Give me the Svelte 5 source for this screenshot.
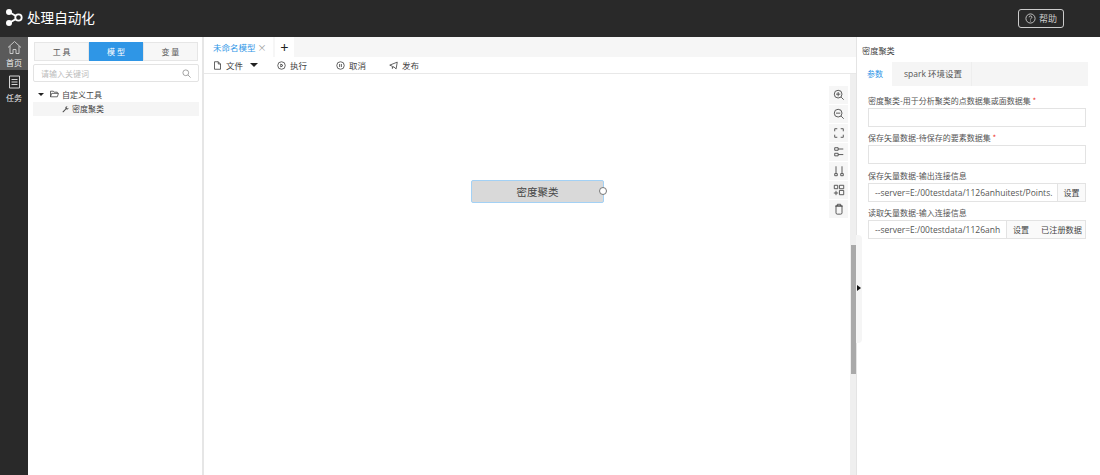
<script lang="ts">
  const toolbar = [
    { label: '文件', icon: 'file', caret: true },
    { label: '执行', icon: 'play' },
    { label: '取消', icon: 'pause' },
    { label: '发布', icon: 'send' }
  ];

  const canvasTools = [
    'M6 3.500v5M3.500 6h5M6 1.500a4.500 4.500 0 1 0 0 9a4.500 4.500 0 0 0 0-9zM9.500 9.500l3 3',
    'M3.500 6h5M6 1.500a4.500 4.500 0 1 0 0 9a4.500 4.500 0 0 0 0-9zM9.500 9.500l3 3',
    'M2 5V2h3M9 2h3v3M12 9v3H9M5 12H2V9',
    'M2 2h4v3H2zM2 8.500h4v3H2zM6 3.500h6M6 10h6',
    'M3.500 1.500v8M10.500 1.500v8M2 10h3v2.500H2zM9 10h3v2.500H9z',
    'M7.500 1.500h5v4h-5zM7.500 7.500h5v5h-5zM1.500 1.500h4v4h-4zM3.500 8v5M1 10.500h5',
    'M3.500 3.500h7v8a1.500 1.500 0 0 1-1.500 1.500H5a1.500 1.500 0 0 1-1.500-1.500zM2.500 3.500h9M5 3.500V1.500h4v2'
  ];
</script>

<div class="app">
  <header class="topbar">
    <div class="brand">
      <svg width="17" height="17" viewBox="0 0 17 17">
        <path d="M3 3L12.500 8.500L3 14" fill="none" stroke="#fff" stroke-width="2" />
        <circle cx="3" cy="3" r="3" fill="#fff" />
        <circle cx="12.500" cy="8.500" r="3.200" fill="#292929" stroke="#fff" stroke-width="1.800" />
        <circle cx="3" cy="14" r="3" fill="#fff" />
      </svg>
      <span>处理自动化</span>
    </div>
    <button class="help">
      <svg width="11" height="11" viewBox="0 0 12 12" fill="none" stroke="#ccc">
        <circle cx="6" cy="6" r="5" />
        <path d="M4.500 4.700a1.500 1.500 0 1 1 2.200 1.300c-.5.300-.7.500-.7 1M6 8.300v1" />
      </svg>
      帮助
    </button>
  </header>

  <div class="body">
    <nav class="rail">
      <div class="rail-item active">
        <svg width="15" height="15" viewBox="0 0 15 15" fill="none" stroke="#c9c9c9">
          <path d="M1 7.500L7.500 1.500L14 7.500M3 6v7.500h3V9.500h3v4h3V6" />
        </svg>
        <span>首页</span>
      </div>
      <div class="rail-item">
        <svg width="13" height="14" viewBox="0 0 13 14" fill="none" stroke="#d5d5d5">
          <path d="M1.500 1h10v12h-10zM3.500 4.500h6M3.500 7h6M3.500 9.500h6" />
        </svg>
        <span>任务</span>
      </div>
    </nav>

    <aside class="tools">
      <div class="seg">
        <div class="seg-btn">工 具</div>
        <div class="seg-btn on">模 型</div>
        <div class="seg-btn">变 量</div>
      </div>
      <div class="search">
        <span>请输入关键词</span>
        <svg width="9" height="9" viewBox="0 0 10 10" fill="none" stroke="#999">
          <circle cx="4.200" cy="4.200" r="3.200" />
          <path d="M6.700 6.700L9.500 9.500" />
        </svg>
      </div>
      <div class="tree-row root">
        <i class="caret"></i>
        <svg width="9" height="8" viewBox="0 0 11 10" fill="none" stroke="#444">
          <path d="M.5 8.500v-7h3.500l1 1.200h4v1.500M.5 8.500l1.500-4.300h8.500l-1.500 4.300z" />
        </svg>
        <span>自定义工具</span>
      </div>
      <div class="tree-row leaf">
        <svg width="7" height="7" viewBox="0 0 10 10" fill="#555">
          <path d="M9.500 2.500a2.500 2.500 0 0 1-3.400 2.300L2.200 9a1 1 0 0 1-1.300-1.300l4-3.900A2.500 2.500 0 0 1 8 .5L6.500 2l1.500 1.500z" />
        </svg>
        <span>密度聚类</span>
      </div>
    </aside>

    <main class="center">
      <div class="tabs">
        <div class="tab">未命名模型 <em>×</em></div>
        <div class="tab-add">+</div>
      </div>
      <div class="actions">
        {#each toolbar as item}
          <div class="action">
            <svg width="9" height="9" viewBox="0 0 12 12" fill="none" stroke="#333">
              {#if item.icon === 'file'}
                <path d="M2 1h5l3 3v7H2zM7 1v3h3" />
              {:else if item.icon === 'play'}
                <circle cx="6" cy="6" r="5" /><path d="M5 4l3 2l-3 2z" />
              {:else if item.icon === 'pause'}
                <circle cx="6" cy="6" r="5" /><path d="M4.800 4v4M7.200 4v4" />
              {:else}
                <path d="M1 5.500L11 1.500L9.500 10.500L6 7.500L4.500 10V7z" />
              {/if}
            </svg>
            <span>{item.label}</span>
            {#if item.caret}<i class="caret wide"></i>{/if}
          </div>
        {/each}
      </div>
      <div class="canvas">
        <div class="node">
          <span>密度聚类</span>
          <i class="port"></i>
        </div>
        <div class="canvas-tools">
          {#each canvasTools as d}
            <div class="canvas-tool">
              <svg width="12" height="12" viewBox="0 0 14 14" fill="none" stroke="#444">
                <path {d} />
              </svg>
            </div>
          {/each}
        </div>
        <div class="scrolltrack"><div class="scrollthumb"></div></div>
      </div>
    </main>

    <div class="collapse"><div class="handle"><i></i></div></div>

    <section class="props">
      <h3>密度聚类</h3>
      <div class="prop-tabs">
        <div class="prop-tab on">参数</div>
        <div class="prop-tab">spark 环境设置</div>
      </div>
      <div class="form">
        <label>密度聚类-用于分析聚类的点数据集或面数据集 <b>*</b></label>
        <div class="field"></div>
        <label>保存矢量数据-待保存的要素数据集 <b>*</b></label>
        <div class="field"></div>
        <label>保存矢量数据-输出连接信息</label>
        <div class="field">
          <span class="val">--server=E:/00testdata/1126anhuitest/Points.</span>
          <span class="addon">设置</span>
        </div>
        <label>读取矢量数据-输入连接信息</label>
        <div class="field">
          <span class="val">--server=E:/00testdata/1126anh</span>
          <span class="addon two"><span>设置</span><span class="reg">已注册数据</span></span>
        </div>
      </div>
    </section>
  </div>
</div>

<style>
  :global(body) {
    background: #fff;
  }

  .app {
    width: 1100px;
    height: 475px;
    display: flex;
    flex-direction: column;
    overflow: hidden;
    font-family: "Noto Sans CJK SC", "Open Sans", sans-serif;
    font-size: 8px;
    color: #444;
  }

  .topbar {
    height: 37px;
    flex: none;
    background: #292929;
    display: flex;
    align-items: center;
    justify-content: space-between;
    padding: 0 36px 0 6px;
    box-sizing: border-box;
  }

  .brand {
    display: flex;
    align-items: center;
    gap: 4px;
    color: #fff;
    font-size: 13.600px;
    line-height: 18px;
    margin-bottom: 3px;
  }

  .help {
    width: 46px;
    height: 19px;
    padding: 0;
    background: transparent;
    border: 1px solid #ccc;
    border-radius: 3px;
    color: #ccc;
    font: inherit;
    font-size: 9px;
    display: flex;
    align-items: center;
    justify-content: center;
    gap: 3px;
  }

  .body {
    flex: 1;
    display: flex;
    min-height: 0;
  }

  .rail {
    width: 28px;
    flex: none;
    background: #292929;
    color: #eee;
  }

  .rail-item {
    height: 33px;
    display: flex;
    flex-direction: column;
    align-items: center;
    justify-content: center;
    gap: 2px;
    line-height: 11px;
  }

  .rail-item + .rail-item {
    height: 37px;
    gap: 3px;
  }

  .rail-item.active {
    background: #5a5a5a;
  }

  .tools {
    width: 176px;
    flex: none;
    box-sizing: border-box;
    border-right: 2px solid #e6e6e6;
    padding: 5px 0 0 5px;
  }

  .seg {
    display: flex;
    height: 19px;
    margin-left: 1px;
    width: 164px;
    background: #e6e6e6;
    padding: 1px;
    box-sizing: border-box;
  }

  .seg-btn {
    flex: 1;
    background: #f7f7f7;
    display: flex;
    align-items: center;
    justify-content: center;
    color: #555;
  }

  .seg-btn.on {
    background: #2f96e6;
    color: #fff;
    margin: -1px 1px;
  }

  .search {
    margin-top: 3px;
    height: 18px;
    width: 166px;
    box-sizing: border-box;
    border: 1px solid #e3e3e3;
    border-radius: 2px;
    display: flex;
    align-items: center;
    justify-content: space-between;
    padding: 0 7px;
    color: #bbb;
  }

  .tree-row {
    height: 14px;
    display: flex;
    align-items: center;
    color: #444;
    width: 166px;
    box-sizing: border-box;
  }

  .root {
    margin-top: 5px;
    padding-left: 5px;
    gap: 3px;
  }

  .root .caret {
    margin-right: 3px;
  }

  .leaf {
    margin-top: 1px;
    padding-left: 29px;
    gap: 3px;
    background: #f5f5f5;
  }

  .leaf span {
    margin-bottom: 2px;
  }

  .caret {
    width: 0;
    height: 0;
    border-left: 3px solid transparent;
    border-right: 3px solid transparent;
    border-top: 3px solid #222;
  }

  .caret.wide {
    border-left-width: 4px;
    border-right-width: 4px;
    border-top-width: 4px;
    margin-left: 3px;
  }

  .center {
    flex: 1;
    min-width: 0;
    display: flex;
    flex-direction: column;
  }

  .tabs {
    height: 20px;
    flex: none;
    display: flex;
    background: #f6f6f6;
  }

  .tab {
    width: 69px;
    background: #fff;
    color: #2f96e6;
    font-size: 8.500px;
    line-height: 21px;
    padding-left: 9px;
    box-sizing: border-box;
    margin-right: 2px;
  }

  .tab em {
    font-style: normal;
    color: #999;
    font-size: 9px;
  }

  .tab-add {
    width: 19px;
    background: #fff;
    color: #222;
    font-size: 14px;
    line-height: 20px;
    text-align: center;
  }

  .actions {
    height: 17px;
    box-sizing: border-box;
    flex: none;
    display: flex;
    align-items: center;
    padding-left: 9px;
    border-bottom: 1px solid #e8e8e8;
    font-size: 8.500px;
  }

  .action {
    display: flex;
    align-items: center;
    gap: 4px;
    margin-right: 23px;
  }

  .action:first-child {
    margin-right: 19px;
  }

  .action:nth-child(2) {
    margin-right: 29px;
  }

  .canvas {
    flex: 1;
    position: relative;
    overflow: hidden;
  }

  .node {
    position: absolute;
    left: 267px;
    top: 106px;
    width: 133px;
    height: 23px;
    box-sizing: border-box;
    background: #d9d9d9;
    border: 1px solid #a3d1f5;
    border-radius: 2px;
    display: flex;
    align-items: center;
    justify-content: center;
    font-size: 10.500px;
    color: #444;
  }

  .node span {
    margin-bottom: 1px;
  }

  .port {
    position: absolute;
    right: -4px;
    top: 6px;
    width: 6px;
    height: 6px;
    border-radius: 50%;
    background: #fff;
    border: 1px solid #777;
  }

  .canvas-tools {
    position: absolute;
    left: 625px;
    top: 12px;
    display: flex;
    flex-direction: column;
    gap: 1px;
  }

  .canvas-tool {
    width: 19px;
    height: 18px;
    background: #f6f6f6;
    display: flex;
    align-items: center;
    justify-content: center;
  }

  .scrolltrack {
    position: absolute;
    right: 0;
    top: 0;
    bottom: 0;
    width: 6px;
    background: #efefef;
  }

  .scrollthumb {
    position: absolute;
    left: 1px;
    top: 171px;
    width: 5px;
    height: 129px;
    background: #a9a9a9;
  }

  .collapse {
    width: 1px;
    flex: none;
    position: relative;
    background: #e4e4e4;
  }

  .handle {
    position: absolute;
    left: 0;
    top: 198px;
    width: 6px;
    height: 108px;
    background: #f5f5f5;
    border-radius: 0 4px 4px 0;
  }

  .handle i {
    position: absolute;
    left: 1px;
    top: 50px;
    width: 0;
    height: 0;
    border-top: 3px solid transparent;
    border-bottom: 3px solid transparent;
    border-left: 4px solid #111;
  }

  .props {
    width: 243px;
    flex: none;
    padding-left: 5px;
    box-sizing: border-box;
  }

  .props h3 {
    margin: 0;
    font-size: 8.200px;
    font-weight: 400;
    color: #444;
    line-height: 13px;
    padding-top: 7px;
    height: 25px;
    box-sizing: border-box;
  }

  .prop-tabs {
    display: flex;
    height: 24px;
    width: 226px;
    background: #f5f5f5;
  }

  .prop-tab {
    line-height: 24px;
    padding: 0 9px 0 12px;
    color: #555;
    font-family: "Open Sans", "Noto Sans CJK SC", sans-serif;
    font-size: 8.500px;
    border-right: 1px solid #eee;
  }

  .prop-tab.on {
    background: #fff;
    color: #2f96e6;
    font-size: 8px;
    width: 30px;
    box-sizing: border-box;
    padding: 0 0 0 5px;
    border-right: none;
  }

  .form {
    padding: 9px 0 0 6px;
  }

  label {
    display: block;
    line-height: 12px;
    height: 12px;
    color: #555;
    margin-bottom: 1px;
  }

  label b {
    color: #e33;
    font-weight: 400;
  }

  .field {
    width: 218px;
    height: 19px;
    box-sizing: border-box;
    border: 1px solid #e3e3e3;
    display: flex;
    margin-bottom: 5.300px;
    align-items: stretch;
  }

  .val {
    flex: 1;
    min-width: 0;
    overflow: hidden;
    white-space: nowrap;
    padding-left: 6px;
    line-height: 17px;
    font-family: "Open Sans", sans-serif;
    font-size: 8.500px;
    color: #555;
  }

  .addon {
    flex: none;
    width: 27px;
    background: #fafafa;
    border-left: 1px solid #e3e3e3;
    text-align: center;
    line-height: 17px;
  }

  .addon.two {
    width: 79px;
    display: flex;
    box-sizing: border-box;
    padding-left: 6px;
    gap: 12px;
  }

  .reg {
    font-size: 8.200px;
  }
</style>
